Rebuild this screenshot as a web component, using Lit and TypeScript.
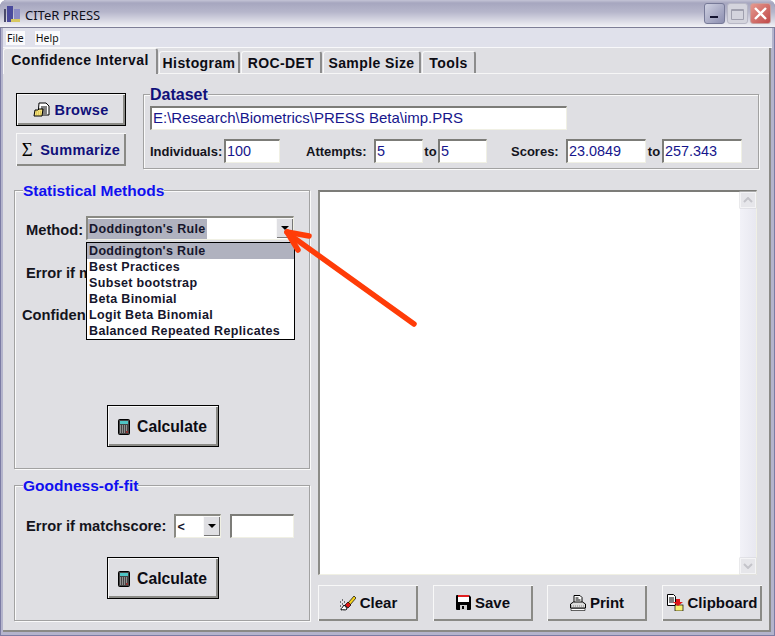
import { LitElement, html, css, svg } from 'lit';
import { customElement, state } from 'lit/decorators.js';

const icons = {
  browse: svg`<svg width="17" height="16" viewBox="0 0 17 16"><path d="M6 1h7l3 3v9H5z" fill="#fff" stroke="#000"/><path d="M8 5h6M8 7h6M8 9h6M8 11h6" stroke="#000"/><path d="M1 14l1-6h3l1-1h4l-1 7z" fill="#f5e27a" stroke="#000"/><path d="M3 10h5M3 12h5" stroke="#c8b040" stroke-dasharray="1 1"/></svg>`,
  calc: svg`<svg width="12" height="16" viewBox="0 0 12 16"><rect x=".5" y=".5" width="11" height="15" rx="1" fill="#444" stroke="#000"/><rect x="2" y="2" width="8" height="3" fill="#4fc4c4"/><path d="M2 7h8M2 9h8M2 11h8M2 13h5" stroke="#ddd" stroke-dasharray="1 1"/><path d="M8 13h2" stroke="#e02020"/></svg>`,
  clear: svg`<svg width="17" height="16" viewBox="0 0 17 16"><path d="M9 8l6-7 2 2-6 7z" fill="#f5d21e" stroke="#000" stroke-width=".7"/><path d="M6 10l3-3 3 3-3 3z" fill="#e01818" stroke="#000" stroke-width=".7"/><path d="M2 15c0-3 2-2 3-5 1 2 3 2 3 4-2 2-4 0-6 1z" fill="#fff" stroke="#000"/><path d="M1 7h1M3 5h1M5 7h1M1 11h1M3 9h1" stroke="#000"/></svg>`,
  save: svg`<svg width="15" height="15" viewBox="0 0 15 15"><path d="M0 1a1 1 0 011-1h12l2 2v12a1 1 0 01-1 1H1a1 1 0 01-1-1z" fill="#000"/><rect x="2" y="0" width="11" height="2" fill="#e02020"/><rect x="2" y="2" width="11" height="5" fill="#fff"/><rect x="4" y="10" width="7" height="5" fill="#ccc"/><rect x="6" y="11" width="2" height="3" fill="#000"/></svg>`,
  print: svg`<svg width="16" height="16" viewBox="0 0 16 16"><path d="M4 .5h6l2 2v6H4z" fill="#fff" stroke="#000"/><path d="M5.5 3h3M5.5 5h5" stroke="#000"/><path d="M.5 9l3-2h9l3 2v4H.5z" fill="#ddd" stroke="#000"/><path d="M1 11h14" stroke="#888" stroke-dasharray="1 1"/><path d="M1 13.5h14v2H1z" fill="#fff" stroke="#000" stroke-width=".6"/></svg>`,
  clip: svg`<svg width="17" height="17" viewBox="0 0 17 17"><path d="M.5.5h6l2 2v9h-8z" fill="#fff" stroke="#000"/><path d="M2 4h5M2 6h5M2 8h5" stroke="#000"/><rect x="8" y="11" width="8" height="6" fill="#f7f070" stroke="#000" stroke-width=".7"/><path d="M9 8V5h4v3h3l-5 4-5-4z" fill="#e01818"/></svg>`,
};

@customElement('app-root')
export class AppRoot extends LitElement {
  @state() tabs = [
    { label: 'Confidence Interval', width: 155 },
    { label: 'Histogram', width: 81 },
    { label: 'ROC-DET', width: 81 },
    { label: 'Sample Size', width: 98 },
    { label: 'Tools', width: 54 },
  ];
  @state() methods = ["Doddington's Rule", 'Best Practices', 'Subset bootstrap', 'Beta Binomial', 'Logit Beta Binomial', 'Balanced Repeated Replicates'];

  static styles = css`
    :host {
      display: block;
      width: 775px;
      height: 636px;
      background: #fff;
      font-family: 'Liberation Sans', Arial, sans-serif;
    }
    * {
      box-sizing: border-box;
    }
    .window {
      position: relative;
      width: 775px;
      height: 636px;
      display: flex;
      flex-direction: column;
      background: #b4b4cc;
      box-shadow: inset 1px 0 0 #7c7ca4, inset -1px -1px 0 #7c7ca4;
      border-radius: 7px 7px 0 0;
      padding: 0 3px 4px;
      overflow: hidden;
    }
    .titlebar {
      height: 28px;
      margin: 0 -3px;
      padding: 0 5px 0 4px;
      display: flex;
      align-items: center;
      gap: 3px;
      background: linear-gradient(#c4c4d6 0, #a6a6bf 3px, #b6b6cb 12px, #f2f2f6 27px);
      border-bottom: 1px solid #7e7e97;
      font-family: 'Noto Sans', Tahoma, sans-serif;
      font-size: 13px;
      color: #10101c;
    }
    .caption {
      flex: 1;
      margin-top: 3px;
    }
    .winbtns {
      display: flex;
      gap: 2px;
      margin-right: -1px;
    }
    .winbtn {
      width: 21px;
      height: 21px;
      border-radius: 3px;
      border: 1px solid #777a98;
      background: linear-gradient(135deg, #d0d2e2, #8c8eb0);
      position: relative;
    }
    .winbtn.max {
      background: #d4d4dd;
      border-color: #b8b8c6;
    }
    .winbtn.close {
      background: linear-gradient(135deg, #e59a90, #c04848);
      border-color: #c8a0a0;
    }
    .menubar {
      height: 20px;
      background: #e0e1eb;
      border-bottom: 1px solid #f8f8fa;
      display: flex;
      align-items: center;
      padding: 0 3px;
      gap: 10px;
      font-family: 'Noto Sans', Tahoma, sans-serif;
      font-size: 10.5px;
      color: #111;
    }
    .menubar span {
      background: #fafafc;
      padding: 0 1px;
    }
    .body {
      flex: 1;
      display: flex;
      flex-direction: column;
      background: #dfdfe3;
      border-bottom: 2px solid #8a8a86;
      border-right: 2px solid #8a8a86;
      margin-right: 1px;
    }
    .tabs {
      display: flex;
      height: 26px;
      padding-top: 2px;
      border-bottom: 1px solid #f6f6f6;
      align-items: flex-end;
    }
    .tab {
      height: 22px;
      margin-right: 1px;
      border: 1px solid #f8f8f8;
      border-right: 2px solid #8c8c8c;
      border-bottom: none;
      border-radius: 3px 3px 0 0;
      font-size: 14px;
      font-weight: bold;
      letter-spacing: 0.4px;
      color: #0c0c14;
      display: flex;
      align-items: center;
      justify-content: center;
      white-space: nowrap;
    }
    .tab.active {
      height: 26px;
      margin-bottom: -1px;
      padding-bottom: 4px;
      background: #dfdfe3;
    }
    .panel {
      flex: 1;
      display: flex;
      flex-direction: column;
      padding: 11px 0 0 11px;
    }
    .top {
      display: flex;
      gap: 17px;
      height: 84px;
      padding-left: 2px;
    }
    .side {
      display: flex;
      flex-direction: column;
      gap: 7px;
      padding-top: 8px;
    }
    button {
      font-family: inherit;
      font-weight: bold;
      font-size: 15px;
      background: #dfdfe3;
      color: #0c0c14;
      border: none;
      display: flex;
      align-items: center;
      justify-content: center;
      gap: 4px;
      padding: 0;
      box-shadow: inset 1px 1px 0 #f8f8f8, inset -2px -2px 0 #8a8a86;
    }
    button.default {
      border: 1px solid #000;
    }
    button.navy {
      color: #10107a;
      width: 110px;
      height: 33px;
      font-size: 14.5px;
      letter-spacing: 0.3px;
    }
    .sigma {
      font-family: 'Liberation Serif', serif;
      font-weight: normal;
      font-size: 19px;
      color: #000;
      margin-right: 3px;
    }
    button.calc {
      width: 112px;
      height: 42px;
      padding-top: 1px;
      font-size: 15.7px;
      gap: 7px;
      margin-left: 1px;
    }
    button.act {
      width: 100px;
      height: 36px;
      padding-bottom: 1px;
    }
    fieldset {
      margin: 0;
      padding: 0;
      min-width: 0;
      border: 1px solid #a2a2a2;
      box-shadow: 1px 1px 0 #fafafa, inset 1px 1px 0 #fafafa;
    }
    legend {
      font-weight: bold;
      font-size: 15.5px;
      line-height: 16px;
      padding: 2px 0 0;
      background: #dfdfe3;
    }
    .dataset {
      width: 616px;
      padding: 3px 0 0 6px;
    }
    .dataset legend {
      color: #10107a;
      font-size: 16px;
    }
    .blue legend {
      color: #1010f0;
      margin-left: 8px;
    }
    .input {
      background: #fff;
      height: 24px;
      border-top: 2px solid #7c7c78;
      border-left: 2px solid #7c7c78;
      border-right: 1px solid #f0f0e4;
      border-bottom: 1px solid #f0f0e4;
      font-size: 14.4px;
      font-weight: normal;
      line-height: 20px;
      padding-left: 1px;
      color: #16168c;
      white-space: nowrap;
      overflow: hidden;
    }
    .path {
      width: 417px;
      font-size: 15px;
    }
    .params {
      display: flex;
      align-items: center;
      margin-top: 9px;
      font-size: 13px;
      font-weight: bold;
      color: #14141c;
    }
    .b1 { width: 74px; }
    .w56 { width: 56px; margin-right: 26px; }
    .b2 { width: 68px; }
    .w49 { width: 49px; }
    .to { width: 15px; text-align: center; }
    .to.wide { width: 16px; }
    .w80 { width: 80px; }
    .b3 { width: 55px; margin-left: 24px; }
    .main {
      display: flex;
      gap: 8px;
      margin-top: 12px;
      flex: 1;
    }
    .left {
      width: 296px;
      display: flex;
      flex-direction: column;
      gap: 7px;
    }
    .stat {
      height: 288px;
      position: relative;
    }
    .fit {
      height: 145px;
    }
    .row {
      display: flex;
      align-items: center;
      font-size: 14.7px;
      font-weight: bold;
      color: #14141c;
      white-space: nowrap;
    }
    .row.method {
      margin: 20px 0 0 11px;
      gap: 3px;
    }
    .row.method .select {
      margin-top: -3px;
    }
    .row.error {
      margin: 25px 0 0 11px;
    }
    .row.conf {
      margin: 26px 0 0 7px;
    }
    .clipped {
      overflow: hidden;
    }
    .error .clipped { width: 60px; }
    .conf .clipped { width: 64px; }
    .select {
      position: relative;
      display: flex;
      align-items: center;
      height: 24px;
      background: #fff;
      border-top: 2px solid #8a8a84;
      border-left: 2px solid #8a8a84;
      border-right: 1px solid #f0f0e4;
      border-bottom: 1px solid #f0f0e4;
      font-size: 12.5px;
      font-weight: bold;
      padding-left: 1px;
      color: #16162c;
    }
    .select.method {
      width: 208px;
      letter-spacing: 0.35px;
      padding-left: 0;
    }
    .select.method .value {
      background: #b0b2bf;
      padding: 0 1px;
      line-height: 20px;
    }
    .select .arrowbtn {
      position: absolute;
      top: 0;
      right: 0;
      width: 17px;
      height: 20px;
      background: #dfdfe3;
      box-shadow: inset 1px 1px 0 #f8f8f8, inset -1px -1px 0 #777;
      display: flex;
      align-items: center;
      justify-content: center;
    }
    .tri {
      width: 0;
      height: 0;
      border-left: 4px solid transparent;
      border-right: 4px solid transparent;
      border-top: 4px solid #000;
    }
    .list {
      position: absolute;
      left: 71px;
      top: 43px;
      width: 209px;
      height: 98px;
      background: #fff;
      border: 1px solid #000;
      font-size: 12.5px;
      font-weight: bold;
      letter-spacing: 0.35px;
      color: #16162c;
      line-height: 16px;
    }
    .list div {
      padding-left: 2px;
      white-space: nowrap;
    }
    .list div.sel {
      background: #b0b2bf;
    }
    .center {
      display: flex;
      justify-content: center;
    }
    .stat .center {
      margin-top: 82px;
    }
    .fit .row {
      margin: 20px 0 0 11px;
    }
    .fit .select {
      width: 47px;
      margin-left: 8px;
    }
    .fit .input {
      width: 64px;
      margin-left: 9px;
    }
    .fit .center {
      margin-top: 19px;
    }
    .right {
      flex: 1;
      display: flex;
      flex-direction: column;
      padding-top: 9px;
    }
    .output {
      width: 439px;
      height: 385px;
      background: #fff;
      border-top: 2px solid #7c7c78;
      border-left: 2px solid #8c8c88;
      border-right: 1px solid #f0f0e4;
      border-bottom: 1px solid #f0f0e4;
      display: flex;
      justify-content: flex-end;
    }
    .scroll {
      width: 16px;
      display: flex;
      flex-direction: column;
      justify-content: space-between;
      background: linear-gradient(90deg, #f2f2f8, #e8e8f0);
    }
    .scroll div {
      height: 16px;
      background: #e6e6ea;
      border: 1px solid #f4f4f6;
      box-shadow: 0 0 0 0.5px #d4d4d8;
      display: flex;
      align-items: center;
      justify-content: center;
    }
    .actions {
      display: flex;
      margin-top: 10px;
      gap: 15px;
    }
    .actions button:nth-child(3) {
      margin-left: -1px;
    }
    .pointer {
      position: absolute;
      left: 0;
      top: 0;
      pointer-events: none;
    }
  `;

  renderChev(up: boolean) {
    return svg`<svg width="10" height="6" viewBox="0 0 10 6"><path d="${up ? 'M1 5l4-4 4 4' : 'M1 1l4 4 4-4'}" fill="none" stroke="#c4c4ca" stroke-width="2"/></svg>`;
  }

  render() {
    return html`
      <div class="window">
        <div class="titlebar">
          <svg width="18" height="20" viewBox="0 0 18 20">
            <rect x="0" y="5" width="2" height="13" fill="#4a4a6a" />
            <rect x="3" y="2" width="6" height="16" fill="#4a4a9c" />
            <rect x="10" y="5" width="6" height="13" fill="#8a8ac4" />
            <rect x="7" y="15" width="9" height="3" fill="#d8c860" />
          </svg>
          <span class="caption">CITeR PRESS</span>
          <div class="winbtns">
            <div class="winbtn">
              <svg width="19" height="19" viewBox="0 0 19 19"><rect x="5" y="12" width="8" height="2" fill="#141430" /></svg>
            </div>
            <div class="winbtn max">
              <svg width="19" height="19" viewBox="0 0 19 19"><path d="M3.5 5.5h12v10h-12zM3.5 6.5h12" fill="none" stroke="#a0a0ae" /></svg>
            </div>
            <div class="winbtn close">
              <svg width="19" height="19" viewBox="0 0 19 19"><path d="M4 4l11 11M15 4L4 15" stroke="#fff" stroke-width="2.4" /></svg>
            </div>
          </div>
        </div>
        <div class="menubar"><span>File</span><span>Help</span></div>
        <div class="body">
          <div class="tabs">
            ${this.tabs.map(
              (t, i) => html`<div class="tab ${i === 0 ? 'active' : ''}" style="width:${t.width}px">${t.label}</div>`
            )}
          </div>
          <div class="panel">
            <div class="top">
              <div class="side">
                <button class="navy default">${icons.browse} Browse</button>
                <button class="navy"><span class="sigma">Σ</span> Summarize</button>
              </div>
              <fieldset class="dataset">
                <legend>Dataset</legend>
                <div class="input path">E:\\Research\\Biometrics\\PRESS Beta\\imp.PRS</div>
                <div class="params">
                  <span class="b1">Individuals:</span>
                  <div class="input w56">100</div>
                  <span class="b2">Attempts:</span>
                  <div class="input w49">5</div>
                  <span class="to">to</span>
                  <div class="input w49">5</div>
                  <span class="b3">Scores:</span>
                  <div class="input w80">23.0849</div>
                  <span class="to wide">to</span>
                  <div class="input w80">257.343</div>
                </div>
              </fieldset>
            </div>
            <div class="main">
              <div class="left">
                <fieldset class="stat blue">
                  <legend>Statistical Methods</legend>
                  <div class="row method">
                    <span>Method:</span>
                    <div class="select method">
                      <span class="value">${this.methods[0]}</span>
                      <div class="arrowbtn"><div class="tri"></div></div>
                    </div>
                  </div>
                  <div class="row error"><span class="clipped">Error if m</span></div>
                  <div class="row conf"><span class="clipped">Confiden</span></div>
                  <div class="center"><button class="calc default">${icons.calc} Calculate</button></div>
                  <div class="list">
                    ${this.methods.map((m, i) => html`<div class=${i === 0 ? 'sel' : ''}>${m}</div>`)}
                  </div>
                </fieldset>
                <fieldset class="fit blue">
                  <legend>Goodness-of-fit</legend>
                  <div class="row">
                    <span>Error if matchscore:</span>
                    <div class="select">&lt;<div class="arrowbtn"><div class="tri"></div></div></div>
                    <div class="input"></div>
                  </div>
                  <div class="center"><button class="calc default">${icons.calc} Calculate</button></div>
                </fieldset>
              </div>
              <div class="right">
                <div class="output">
                  <div class="scroll">
                    <div>${this.renderChev(true)}</div>
                    <div>${this.renderChev(false)}</div>
                  </div>
                </div>
                <div class="actions">
                  <button class="act">${icons.clear} Clear</button>
                  <button class="act">${icons.save} Save</button>
                  <button class="act">${icons.print} Print</button>
                  <button class="act">${icons.clip} Clipboard</button>
                </div>
              </div>
            </div>
          </div>
        </div>
        <svg class="pointer" width="775" height="636" viewBox="0 0 775 636">
          <g stroke="#ff3c08" stroke-width="5.5" fill="none" stroke-linecap="round">
            <path d="M414 324L290 235" />
            <path d="M287 232L309 236" />
            <path d="M287 232L298 250" />
          </g>
        </svg>
      </div>
    `;
  }
}
